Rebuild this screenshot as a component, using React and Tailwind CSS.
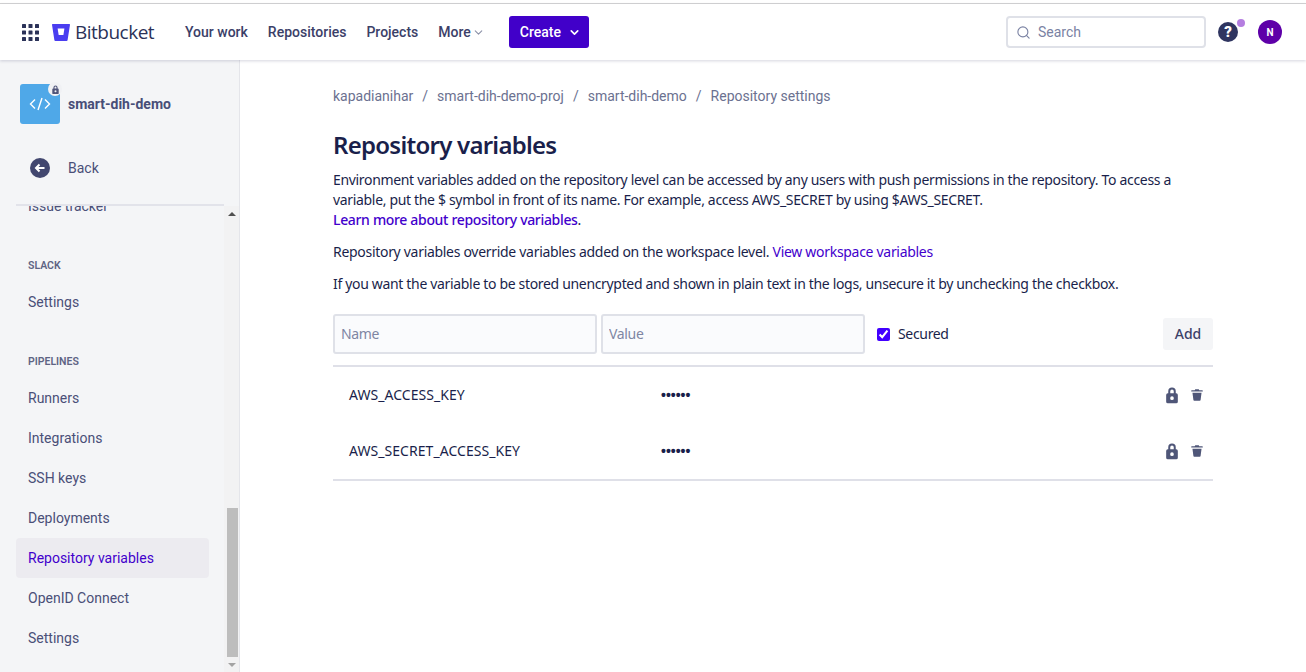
import { Search, ChevronDown } from 'lucide-react';

const mainFont = "font-['Noto_Sans',sans-serif]";

function GridIcon() {
  const cells = [];
  for (let y = 0; y < 3; y++) {
    for (let x = 0; x < 3; x++) {
      cells.push(<rect key={`${x}-${y}`} x={x * 6.5} y={y * 6.5} width="4" height="4" rx="0.6" />);
    }
  }
  return (
    <svg width="17" height="17" viewBox="0 0 17 17" fill="#2b3258">
      {cells}
    </svg>
  );
}

function BitbucketLogo() {
  return (
    <svg width="18" height="17" viewBox="0 0 18 17">
      <path d="M.6 0h16.8c.4 0 .6.3.6.7l-2.4 15.4c0 .5-.4.9-.9.9H3.4c-.5 0-.9-.3-1-.8L0 .7C0 .3.2 0 .6 0z" fill="#4a3df0" />
      <path d="M5.6 4.6h6.8l-1 6.4H6.7z" fill="#fff" />
    </svg>
  );
}

function LockIcon({ size = 20, color = '#4f5678' }) {
  return (
    <svg width={size} height={size} viewBox="0 0 24 24" fill={color}>
      <path fillRule="evenodd" d="M7.500 10V7.500a4.500 4.500 0 0 1 9 0V10h.5a2 2 0 0 1 2 2v8a2 2 0 0 1-2 2H7a2 2 0 0 1-2-2v-8a2 2 0 0 1 2-2h.5zm2.400 0h4.200V7.500a2.100 2.100 0 0 0-4.200 0V10zM12 18a2.200 2.200 0 1 0 0-4.400 2.200 2.200 0 0 0 0 4.400z" />
    </svg>
  );
}

function TrashIcon() {
  return (
    <svg width="14" height="14" viewBox="0 0 16 16" fill="#4f5678">
      <path d="M6 1.500h4l.6 1H14a.6.6 0 0 1 .6.6v1H1.400v-1a.6.6 0 0 1 .6-.6h3.400z" />
      <path d="M2.800 5.400h10.400l-1.100 8.200a1 1 0 0 1-1 .9H4.900a1 1 0 0 1-1-.9z" />
    </svg>
  );
}

function NavLink({ children, active }) {
  return (
    <div className={`h-10 flex items-center px-3 rounded text-sm ${active ? 'bg-[#ecebf0] text-[#4200cc]' : 'text-[#4a4f78]'}`}>
      {children}
    </div>
  );
}

function NavHeading({ children, className }) {
  return <div className={`px-3 text-[10.5px] font-semibold uppercase leading-4 text-[#5e6484] ${className}`}>{children}</div>;
}

function VariableRow({ name }) {
  return (
    <div className="h-14 flex items-center text-sm text-[#1a1f4b]">
      <div className="w-[328px] pl-4 shrink-0 tracking-[0.05px]">{name}</div>
      <div className="flex-1 text-sm font-bold font-['Liberation_Sans',sans-serif]">••••••</div>
      <div className="flex items-center gap-2 pr-[9px]">
        <LockIcon />
        <TrashIcon />
      </div>
    </div>
  );
}

export default function App() {
  return (
    <div className="h-[672px] w-[1306px] overflow-hidden flex flex-col bg-white font-['Roboto',sans-serif]">
      <div className="h-[4px] shrink-0 border-b border-[#d4d4d4] bg-white" />

      <header className="relative z-10 h-14 shrink-0 flex items-center pl-[22px] pr-6 bg-white shadow-[0_1px_3px_rgba(40,40,90,0.2)]">
        <GridIcon />
        <div className="ml-[13px] w-[103px] shrink-0 flex items-center gap-[5px]">
          <BitbucketLogo />
          <span className="text-[19px] leading-none tracking-[-0.5px] text-[#2b3258] font-['Open_Sans',sans-serif]">Bitbucket</span>
        </div>
        <nav className="ml-[30px] flex items-center gap-5 text-sm font-medium text-[#3b4068]">
          <span>Your work</span>
          <span>Repositories</span>
          <span>Projects</span>
          <span className="flex items-center gap-[1px]">
            More
            <ChevronDown size={13} className="text-[#8c91a8]" />
          </span>
        </nav>
        <button className="ml-6 w-20 h-8 flex items-center pl-[11px] gap-[7px] rounded-[3px] bg-[#4100c9] text-sm font-medium text-white">
          Create
          <ChevronDown size={13} strokeWidth={3} />
        </button>
        <div className="ml-auto w-[200px] h-8 flex items-center gap-[7px] pl-2 rounded border-2 border-[#dfe1e8] text-sm text-[#7a82a3]">
          <Search size={15} strokeWidth={1.8} />
          <span>Search</span>
        </div>
        <div className="relative ml-3 w-5 h-5 rounded-full bg-[#2f3560] flex items-center justify-center text-[15px] leading-none font-black text-white">
          ?
          <span className="absolute -top-[3px] -right-[7px] w-2 h-2 rounded-full bg-[#b57ee0]" />
        </div>
        <div className="ml-[20px] w-6 h-6 rounded-full bg-[#5e00a8] flex items-center justify-center text-[10px] font-bold text-white">N</div>
      </header>

      <div className="flex-1 flex min-h-0">
        <aside className="w-[240px] shrink-0 flex flex-col bg-[#f4f5f7] border-r border-[#e4e5ea]">
          <div className="h-[146px] shrink-0 flex flex-col px-4">
            <div className="mt-6 ml-1 flex items-center gap-2">
              <div className="relative w-10 h-10 rounded-[3px] bg-[#4fa8e8] flex items-center justify-center">
                <svg width="22" height="14" viewBox="0 0 22 14" fill="none" stroke="#fff" strokeWidth="1.4">
                  <path d="M6 2.500 1.500 7 6 11.500M16 2.500 20.500 7 16 11.500M13 1 9 13" />
                </svg>
                <div className="absolute -top-[2px] -right-[2px] w-[14px] h-[14px] rounded-full bg-[#f0f1f4] flex items-center justify-center">
                  <LockIcon size={11} color="#50557a" />
                </div>
              </div>
              <span className="text-sm font-bold text-[#484e78]">smart-dih-demo</span>
            </div>
            <div className="mt-[34px] ml-[14px] flex items-center gap-[18px] text-sm text-[#4a4f78]">
              <svg width="20" height="20" viewBox="0 0 20 20">
                <circle cx="10" cy="10" r="10" fill="#42476f" />
                <path d="M14.500 10h-8M9.500 6.500 6 10l3.500 3.500" fill="none" stroke="#fff" strokeWidth="2" />
              </svg>
              <span>Back</span>
            </div>
            <div className="mt-auto w-[208px] h-[2px] shrink-0 bg-[#e2e3ea]" />
          </div>

          <div className="flex-1 min-h-0 flex overflow-hidden">
            <div className="w-[193px] ml-4 shrink-0 -mt-[20px]">
              <NavLink>Issue tracker</NavLink>
              <NavHeading className="mt-8 mb-2">Slack</NavHeading>
              <NavLink>Settings</NavLink>
              <NavHeading className="mt-8 mb-2">Pipelines</NavHeading>
              <NavLink>Runners</NavLink>
              <NavLink>Integrations</NavLink>
              <NavLink>SSH keys</NavLink>
              <NavLink>Deployments</NavLink>
              <NavLink active>Repository variables</NavLink>
              <NavLink>OpenID Connect</NavLink>
              <NavLink>Settings</NavLink>
            </div>
            <div className="ml-auto w-[15px] flex flex-col items-center bg-[#f2f2f3]">
              <div className="h-4 flex items-center justify-center">
                <div className="w-0 h-0 border-x-[4px] border-x-transparent border-b-[4px] border-b-[#505050]" />
              </div>
              <div className="mt-[286px] ml-[2px] w-[11px] h-[149px] bg-[#bdbdbd]" />
              <div className="h-[15px] flex items-center justify-center">
                <div className="w-0 h-0 border-x-[4px] border-x-transparent border-t-[4px] border-t-[#a3a3a3]" />
              </div>
            </div>
          </div>
        </aside>

        <main className={`flex-1 pl-[93px] ${mainFont}`}>
          <div className="w-[880px]">
            <div className="pt-[26px] flex gap-[9px] text-sm leading-5 text-[#6b7190] font-['Roboto',sans-serif]">
              <span>kapadianihar</span>
              <span>/</span>
              <span>smart-dih-demo-proj</span>
              <span>/</span>
              <span>smart-dih-demo</span>
              <span>/</span>
              <span>Repository settings</span>
            </div>
            <h1 className="mt-[25px] text-2xl leading-7 font-semibold tracking-[-0.75px] text-[#1a1f4b]">Repository variables</h1>
            <div className="mt-[11px] text-sm leading-5 tracking-[-0.33px] text-[#1a1f4b]">
              <p>
                Environment variables added on the repository level can be accessed by any users with push permissions in the repository. To access a variable, put the $ symbol in front of its name. For example, access AWS_SECRET by using $AWS_SECRET.
                <br />
                <span className="font-medium text-[#4200cc]">Learn more about repository variables</span>.
              </p>
              <p className="mt-3 tracking-[-0.3px]">
                Repository variables override variables added on the workspace level. <span className="text-[#4200cc]">View workspace variables</span>
              </p>
              <p className="mt-3">If you want the variable to be stored unencrypted and shown in plain text in the logs, unsecure it by unchecking the checkbox.</p>
            </div>

            <div className="mt-[20px] flex items-center text-sm">
              <input placeholder="Name" className="w-[264px] h-10 px-[6px] pb-[2px] rounded-[3px] border-2 border-[#dfe1e8] bg-[#fafbfd] tracking-[-0.33px] placeholder:text-[#7f86a3]" />
              <input placeholder="Value" className="ml-1 w-[264px] h-10 px-[6px] pb-[2px] rounded-[3px] border-2 border-[#dfe1e8] bg-[#fafbfd] tracking-[-0.33px] placeholder:text-[#7f86a3]" />
              <input type="checkbox" defaultChecked className="ml-3 w-[13px] h-[13px] accent-[#4200ff]" />
              <span className="ml-2 tracking-[-0.33px] text-[#1a1f4b]">Secured</span>
              <button className="ml-auto w-[50px] h-8 rounded-[3px] bg-[#f4f5f7] font-medium text-[#3b4068]">Add</button>
            </div>

            <div className="mt-[11px] border-y-2 border-[#dfe0e8]">
              <VariableRow name="AWS_ACCESS_KEY" />
              <VariableRow name="AWS_SECRET_ACCESS_KEY" />
            </div>
          </div>
        </main>
      </div>
    </div>
  );
}
